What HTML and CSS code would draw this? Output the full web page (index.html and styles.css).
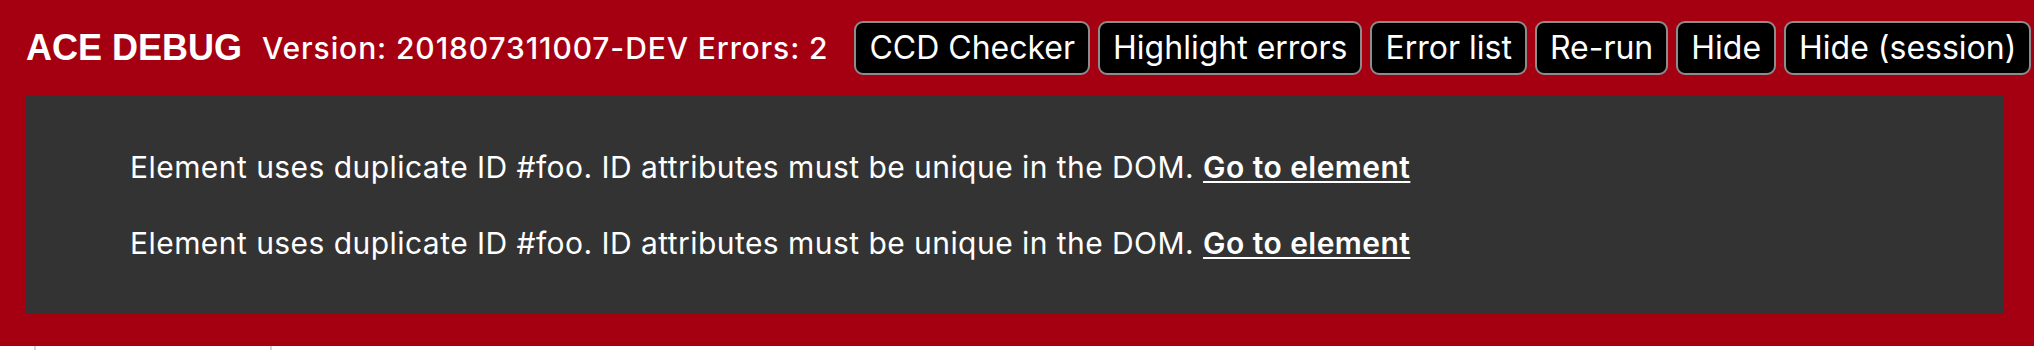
FILE: index.html
```html
<!DOCTYPE html>
<html lang="en">
<head>
<meta charset="utf-8">
<title>ACE Debug</title>
<link rel="stylesheet" href="styles.css">
</head>
<body>
<div class="ace-bar">
  <div class="ace-header">
    <h1 class="ace-title">ACE DEBUG</h1>
    <span class="ace-meta">Version: 201807311007-DEV Errors: 2</span>
    <div class="ace-actions">
      <button class="ace-btn">CCD Checker</button>
      <button class="ace-btn">Highlight errors</button>
      <button class="ace-btn">Error list</button>
      <button class="ace-btn">Re-run</button>
      <button class="ace-btn">Hide</button>
      <button class="ace-btn">Hide (session)</button>
    </div>
  </div>
  <div class="ace-panel">
    <p class="ace-error">Element uses duplicate ID #foo. ID attributes must be unique in the DOM. <a class="ace-link" href="#">Go to element</a></p>
    <p class="ace-error">Element uses duplicate ID #foo. ID attributes must be unique in the DOM. <a class="ace-link" href="#">Go to element</a></p>
  </div>
</div>
<div class="page-below">
  <div class="cell cell-a"></div>
  <div class="cell cell-b"></div>
</div>
</body>
</html>
```
FILE: styles.css
```css
html, body {
  margin: 0;
  padding: 0;
  background: #ffffff;
}

body {
  font-family: Inter, "Noto Sans", sans-serif;
}

.ace-bar {
  background: #a50011;
  padding: 21px 15px 32px 26px;
}

.ace-header {
  display: flex;
  align-items: center;
  height: 54px;
  white-space: nowrap;
}

.ace-title {
  margin: 0;
  font-family: "Liberation Sans", Arial, sans-serif;
  font-weight: 700;
  font-size: 36px;
  line-height: 54px;
  color: #ffffff;
}

.ace-meta {
  margin-left: 20px;
  margin-right: 26px;
  font-weight: 500;
  font-size: 30px;
  letter-spacing: 0.9px;
  line-height: 54px;
  color: #ffffff;
}

.ace-actions {
  display: flex;
  gap: 8px;
}

.ace-btn {
  height: 54px;
  box-sizing: border-box;
  padding: 0 13px;
  border: 2px solid #8c8c8c;
  border-radius: 9px;
  background: #000000;
  color: #ffffff;
  font-family: Inter, "Noto Sans", sans-serif;
  font-size: 32px;
  font-weight: 400;
  line-height: 50px;
}

.ace-panel {
  margin-top: 21px;
  margin-right: 15px;
  background: #333333;
  padding: 48px 0 48px 104px;
  color: #ffffff;
}

.ace-error {
  margin: 0;
  font-size: 30px;
  letter-spacing: 0.45px;
  line-height: 46px;
}

.ace-error + .ace-error {
  margin-top: 30px;
}

.ace-link {
  color: #ffffff;
  font-weight: 600;
  text-decoration: underline;
  text-decoration-thickness: 2px;
  text-underline-offset: 3px;
}

.page-below {
  display: flex;
  height: 20px;
}

.cell {
  border-left: 2px solid #d4d4d4;
}

.cell-a {
  margin-left: 34px;
  width: 234px;
}
```
